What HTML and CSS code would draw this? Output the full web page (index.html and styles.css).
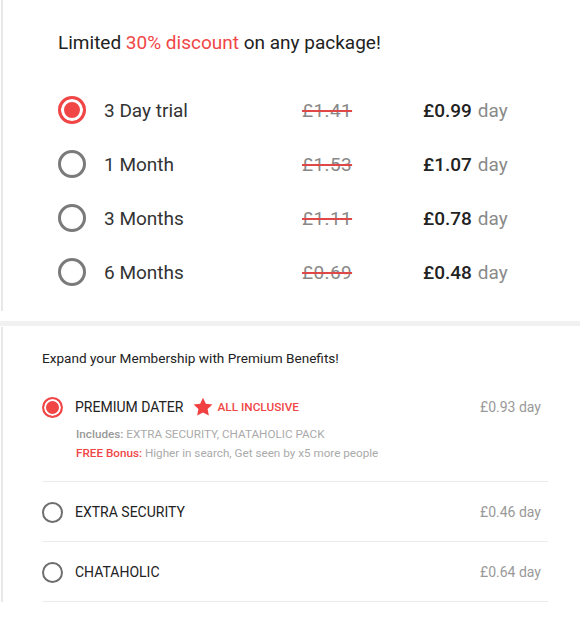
FILE: index.html
```html
<!DOCTYPE html>
<html lang="en">
<head>
    <meta charset="UTF-8">
    <meta name="viewport" content="width=device-width, initial-scale=1.0">
    <title>Packages</title>
    <link rel="stylesheet" href="styles.css">
</head>
<body>
    <div class="discount-panel">
        <div class="discount-title">Limited <span class="accent">30% discount</span> on any package!</div>
        <div class="plan-list">
            <div class="plan-row">
                <span class="radio-big selected"></span>
                <span class="plan-name">3 Day trial</span>
                <span class="plan-old">£1.41</span>
                <span class="plan-price">£0.99<span class="plan-unit">day</span></span>
            </div>
            <div class="plan-row">
                <span class="radio-big"></span>
                <span class="plan-name">1 Month</span>
                <span class="plan-old">£1.53</span>
                <span class="plan-price">£1.07<span class="plan-unit">day</span></span>
            </div>
            <div class="plan-row">
                <span class="radio-big"></span>
                <span class="plan-name">3 Months</span>
                <span class="plan-old">£1.11</span>
                <span class="plan-price">£0.78<span class="plan-unit">day</span></span>
            </div>
            <div class="plan-row">
                <span class="radio-big"></span>
                <span class="plan-name">6 Months</span>
                <span class="plan-old">£0.69</span>
                <span class="plan-price">£0.48<span class="plan-unit">day</span></span>
            </div>
        </div>
    </div>

    <div class="divider-band"></div>

    <div class="benefit-panel">
        <div class="benefit-title">Expand your Membership with Premium Benefits!</div>
        <div class="benefit-list">
            <div class="benefit-row premium">
                <div class="benefit-head">
                    <span class="radio-small selected"></span>
                    <span class="benefit-name">PREMIUM DATER</span>
                    <svg class="star" viewBox="0 0 24 24" width="22" height="22">
                        <path d="M12 1.8l3.1 6.6 7.2.9-5.3 5 1.4 7.1L12 17.9l-6.4 3.5 1.4-7.1-5.3-5 7.2-.9z" fill="#f0403f"/>
                    </svg>
                    <span class="benefit-tag">ALL INCLUSIVE</span>
                    <span class="benefit-price">£0.93 day</span>
                </div>
                <div class="benefit-notes">
                    <div class="benefit-note"><span class="note-label">Includes:</span> EXTRA SECURITY, CHATAHOLIC PACK</div>
                    <div class="benefit-note"><span class="note-label red">FREE Bonus:</span> Higher in search, Get seen by x5 more people</div>
                </div>
            </div>
            <div class="benefit-row">
                <div class="benefit-head">
                    <span class="radio-small"></span>
                    <span class="benefit-name">EXTRA SECURITY</span>
                    <span class="benefit-price">£0.46 day</span>
                </div>
            </div>
            <div class="benefit-row">
                <div class="benefit-head">
                    <span class="radio-small"></span>
                    <span class="benefit-name">CHATAHOLIC</span>
                    <span class="benefit-price">£0.64 day</span>
                </div>
            </div>
        </div>
    </div>
</body>
</html>
```

FILE: styles.css
```css
body {
    font-family: Roboto, 'Liberation Sans', Arial, sans-serif;
    margin: 0;
    padding: 0;
    background-color: #fff;
    color: #222;
}

/* top panel */
.discount-panel {
    margin-left: 1px;
    border-left: 2px solid #e8e8e8;
    padding: 30px 0 12px 55px;
}

.discount-title {
    font-size: 19px;
    line-height: 26px;
    color: #222;
}

.accent {
    color: #f04646;
}

.plan-list {
    margin-top: 27px;
}

.plan-row {
    display: flex;
    align-items: center;
    height: 54px;
}

.radio-big {
    width: 28px;
    height: 28px;
    box-sizing: border-box;
    border: 3px solid #7a7a7a;
    border-radius: 50%;
    flex-shrink: 0;
}

.radio-big.selected {
    border-color: #f04646;
    background-color: #f04646;
    box-shadow: inset 0 0 0 3px #fff;
}

.plan-name {
    margin-left: 18px;
    width: 198px;
    font-size: 19px;
    color: #333;
}

.plan-old {
    width: 121px;
    font-size: 19px;
    letter-spacing: 0.4px;
    color: #888;
    text-decoration: line-through;
    text-decoration-color: #e04848;
    text-decoration-thickness: 1.5px;
}

.plan-price {
    font-size: 19px;
    font-weight: 500;
    color: #222;
}

.plan-unit {
    font-weight: 400;
    color: #8a8a8a;
    margin-left: 6px;
}

/* separator between panels */
.divider-band {
    margin-top: 10px;
    height: 5px;
    background-color: #f1f1f1;
}

/* bottom panel */
.benefit-panel {
    margin-top: 1px;
    margin-left: 1px;
    border-left: 2px solid #e8e8e8;
    padding: 21px 32px 0 39px;
}

.benefit-title {
    font-size: 13.6px;
    line-height: 20px;
    color: #222;
}

.benefit-list {
    margin-top: 19px;
}

.benefit-row {
    border-bottom: 1px solid #ececec;
    padding: 20px 7px 19px 0;
}

.benefit-row.premium {
    padding-top: 10px;
    padding-bottom: 18px;
}

.benefit-head {
    display: flex;
    align-items: center;
    height: 20px;
}

.radio-small {
    width: 21px;
    height: 21px;
    box-sizing: border-box;
    border: 2px solid #6e6e6e;
    border-radius: 50%;
    flex-shrink: 0;
}

.radio-small.selected {
    border-color: #f04646;
    background-color: #f04646;
    box-shadow: inset 0 0 0 2px #fff;
}

.benefit-name {
    margin-left: 12px;
    font-size: 14px;
    color: #222;
}

.star {
    margin-left: 9px;
}

.benefit-tag {
    margin-left: 3px;
    font-size: 11.8px;
    font-weight: 500;
    color: #f04646;
}

.benefit-price {
    margin-left: auto;
    font-size: 14px;
    color: #999;
}

.benefit-notes {
    margin-top: 8px;
    margin-left: 34px;
}

.benefit-note {
    font-size: 11.7px;
    line-height: 19px;
    color: #aaa;
}

.note-label {
    font-weight: 500;
    color: #999;
}

.note-label.red {
    color: #f04646;
}
```
